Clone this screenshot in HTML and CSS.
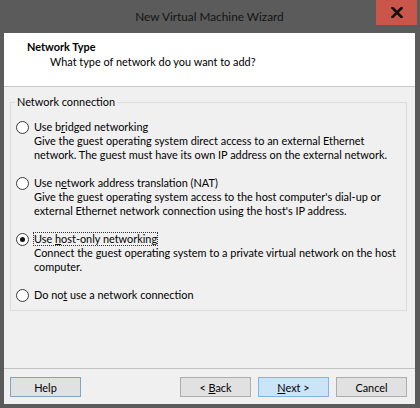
FILE: index.html
```html
<!DOCTYPE html>
<html>
<head>
<meta charset="utf-8">
<link rel="stylesheet" href="styles.css">
</head>
<body>
<div class="window">
  <div class="titlebar">
    <div></div>
    <div class="title">New Virtual Machine Wizard</div>
    <div class="close">
      <svg width="12" height="11" viewBox="0 0 12 11"><path d="M1.5 1 L10.5 10 M10.5 1 L1.5 10" stroke="#111" stroke-width="2.6" stroke-linecap="square"/></svg>
    </div>
  </div>
  <div class="client">
    <div class="header">
      <div class="h-title">Network Type</div>
      <div class="h-sub">What type of network do you want to add?</div>
    </div>
    <div class="body">
      <fieldset class="group">
        <legend>Network connection</legend>
        <div class="option">
          <div class="opt-line"><span class="radio"></span><span class="opt-label">Use b<u>r</u>idged networking</span></div>
          <div class="desc">Give the guest operating system direct access to an external Ethernet network. The guest must have its own IP address on the external network.</div>
        </div>
        <div class="option">
          <div class="opt-line"><span class="radio"></span><span class="opt-label">Use n<u>e</u>twork address translation (NAT)</span></div>
          <div class="desc">Give the guest operating system access to the host computer's dial-up or external Ethernet network connection using the host's IP address.</div>
        </div>
        <div class="option">
          <div class="opt-line"><span class="radio checked"></span><span class="opt-label focus">Use <u>h</u>ost-only networking</span></div>
          <div class="desc">Connect the guest operating system to a private virtual network on the host computer.</div>
        </div>
        <div class="option">
          <div class="opt-line"><span class="radio"></span><span class="opt-label">Do no<u>t</u> use a network connection</span></div>
        </div>
      </fieldset>
    </div>
    <div class="footer">
      <button class="btn help">Help</button>
      <div class="spacer"></div>
      <button class="btn">&lt; <u>B</u>ack</button>
      <button class="btn next"><u>N</u>ext &gt;</button>
      <button class="btn">Cancel</button>
    </div>
  </div>
</div>
</body>
</html>
```

FILE: styles.css
```css
html, body {
  margin: 0;
  padding: 0;
  background: #5b5b5b;
}
.window {
  width: 420px;
  height: 408px;
  box-sizing: border-box;
  background: #5b5b5b;
  padding: 0 5px 4px 4px;
  display: flex;
  flex-direction: column;
  font-family: Lato, "Noto Sans", sans-serif;
  font-size: 10.9px;
  color: #000;
}
.titlebar {
  height: 33px;
  display: grid;
  grid-template-columns: 1fr auto 1fr;
  align-items: start;
}
.title {
  padding-top: 8px;
  font-size: 11.8px;
  color: #141414;
  line-height: 17px;
}
.close {
  justify-self: end;
  width: 41px;
  height: 25px;
  margin-right: -2px;
  background: #c9554b;
  display: flex;
  align-items: center;
  justify-content: center;
}
.client {
  flex: 1;
  background: #f0f0f0;
  display: flex;
  flex-direction: column;
}
.header {
  height: 54px;
  box-sizing: border-box;
  background: #fff;
  border-bottom: 1px solid #c9c9c9;
  padding: 7px 0 0 23px;
  line-height: 14px;
}
.h-title {
  font-weight: bold;
}
.h-sub {
  padding-left: 23px;
  margin-top: 1px;
}
.body {
  flex: 1;
  padding: 8px 8px 0 6px;
}
.group {
  margin: 0;
  padding: 11px 6px 4px 5px;
  border: 1px solid #dcdcdc;
  min-width: 0;
}
.group legend {
  padding: 0 2px 0 2px;
  margin-left: -1px;
  line-height: 14px;
}
.option {
  margin-bottom: 14px;
}
.option:last-child {
  margin-bottom: 4px;
}
.opt-line {
  display: flex;
  align-items: center;
  height: 14px;
  line-height: 14px;
}
.radio {
  width: 11px;
  height: 11px;
  border: 1px solid #3a3a3a;
  border-radius: 50%;
  background: #fff;
  box-sizing: content-box;
  position: relative;
  margin-right: 4px;
  flex: none;
}
.radio.checked::after {
  content: "";
  position: absolute;
  left: 3px;
  top: 3px;
  width: 5px;
  height: 5px;
  border-radius: 50%;
  background: #111;
}
.opt-label {
  padding: 0 1px;
}
.opt-label.focus {
  outline: 1px dotted #333;
  outline-offset: -1px;
}
.desc {
  padding-left: 18px;
  line-height: 14px;
}
.footer {
  border-top: 1px solid #c2c2c2;
  padding: 8px 8px 7px 6px;
  display: flex;
  gap: 7px;
}
.spacer {
  flex: 1;
}
.btn {
  width: 71px;
  height: 20px;
  margin: 0;
  padding: 0;
  font-family: inherit;
  font-size: 10.9px;
  color: #000;
  background: #e1e1e1;
  border: 1px solid #adadad;
  border-radius: 0;
}
.btn.help {
  border-color: #7fa4c9;
}
.btn.next {
  background: #cce4f7;
  border-color: #7eb4ea;
}
```
